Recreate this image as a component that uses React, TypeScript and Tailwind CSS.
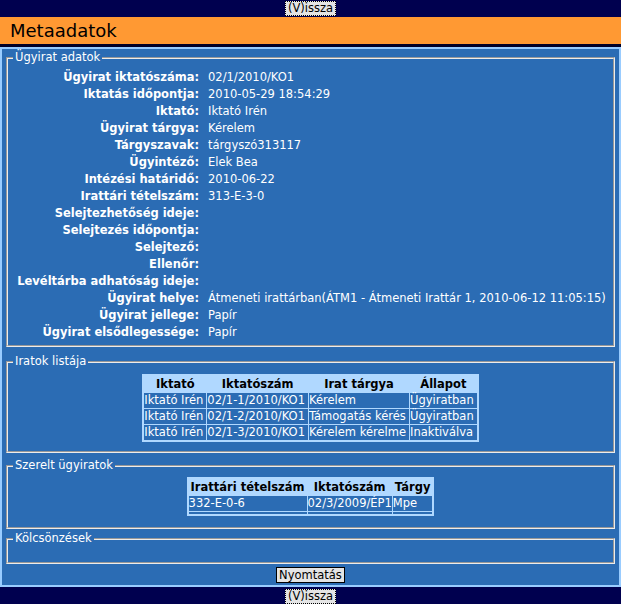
import React from "react"

const metaRows: [string, string][] = [
  ["Ügyirat iktatószáma:", "02/1/2010/KO1"],
  ["Iktatás időpontja:", "2010-05-29 18:54:29"],
  ["Iktató:", "Iktató Irén"],
  ["Ügyirat tárgya:", "Kérelem"],
  ["Tárgyszavak:", "tárgyszó313117"],
  ["Ügyintéző:", "Elek Bea"],
  ["Intézési határidő:", "2010-06-22"],
  ["Irattári tételszám:", "313-E-3-0"],
  ["Selejtezhetőség ideje:", ""],
  ["Selejtezés időpontja:", ""],
  ["Selejtező:", ""],
  ["Ellenőr:", ""],
  ["Levéltárba adhatóság ideje:", ""],
  ["Ügyirat helye:", "Átmeneti irattárban(ÁTM1 - Átmeneti Irattár 1, 2010-06-12 11:05:15)"],
  ["Ügyirat jellege:", "Papír"],
  ["Ügyirat elsődlegessége:", "Papír"],
]

const iratok = [
  ["Iktató Irén", "02/1-1/2010/KO1", "Kérelem", "Ügyiratban"],
  ["Iktató Irén", "02/1-2/2010/KO1", "Támogatás kérés", "Ügyiratban"],
  ["Iktató Irén", "02/1-3/2010/KO1", "Kérelem kérelme", "Inaktiválva"],
]

// fieldset with a grooved light border, legend sits in the top edge
const Box = ({
  title,
  className,
  children,
}: {
  title: string
  className: string
  children?: React.ReactNode
}) => (
  <fieldset className={`mx-[4px] border-2 border-[#ececec] [border-style:groove] ${className}`}>
    <legend className="ml-[5px] px-[2px] leading-[13px] text-white">{title}</legend>
    {children}
  </fieldset>
)

const VisszaButton = () => (
  <button className="h-[15px] px-[2px] bg-[#e4e4e4] text-black leading-[13px] border border-dotted border-black">
    (V)issza
  </button>
)

export default function App() {
  return (
    <div className="w-[621px] h-[604px] bg-[#00004f] font-['DejaVu_Sans',sans-serif] text-[11.5px] overflow-hidden">
      {/* top bar */}
      <div className="h-[17px] flex justify-center pt-px">
        <VisszaButton />
      </div>
      <div className="h-[27px] bg-[#ff9933] px-[10px] flex items-center text-[18px] text-black">
        Metaadatok
      </div>
      <div className="h-[3px] bg-[#000028]" />

      {/* main panel */}
      <div className="border-2 border-[#99ccff] bg-[#2b6cb4] text-white">
        <Box title="Ügyirat adatok" className="mt-[2px] pt-[5px] pb-[4px]">
          <div className="grid grid-cols-[191px_1fr] gap-x-[9px] leading-[17px]">
            {metaRows.map(([label, value]) => (
              <React.Fragment key={label}>
                <div className="text-right font-bold whitespace-nowrap">{label}</div>
                <div className="whitespace-nowrap">{value}</div>
              </React.Fragment>
            ))}
          </div>
        </Box>

        <Box title="Iratok listája" className="mt-[8px] pt-[6px] pb-[9px]">
          <table className="mx-auto border-separate border-spacing-[1px] bg-[#b0d8ff] border border-[#b0d8ff]">
            <thead>
              <tr className="text-black font-bold leading-[16px]">
                <th className="px-0">Iktató</th>
                <th className="px-0">Iktatószám</th>
                <th className="px-0">Irat tárgya</th>
                <th className="px-0">Állapot</th>
              </tr>
            </thead>
            <tbody>
              {iratok.map((row, i) => (
                <tr key={i} className="leading-[15px]">
                  {row.map((cell, j) => (
                    <td key={j} className="bg-[#2b6cb4] whitespace-nowrap p-0 pr-[3px]">
                      {cell}
                    </td>
                  ))}
                </tr>
              ))}
            </tbody>
          </table>
        </Box>

        <Box title="Szerelt ügyiratok" className="mt-[6px] pt-[5px] pb-[11px]">
          <table className="mx-auto border-separate border-spacing-[1px] bg-[#b0d8ff] border border-[#b0d8ff]">
            <thead>
              <tr className="text-black font-bold leading-[16px]">
                <th className="px-[2px]">Irattári tételszám</th>
                <th className="px-[2px]">Iktatószám</th>
                <th className="px-[2px]">Tárgy</th>
              </tr>
            </thead>
            <tbody>
              <tr className="leading-[15px]">
                <td className="bg-[#2b6cb4] p-0">332-E-0-6</td>
                <td className="bg-[#2b6cb4] p-0">02/3/2009/ÉP1</td>
                <td className="bg-[#2b6cb4] p-0">Mpe</td>
              </tr>
              <tr>
                <td className="bg-[#2b6cb4] p-0 h-[2px]" />
                <td className="bg-[#2b6cb4] p-0 h-[2px]" />
                <td className="bg-[#2b6cb4] p-0 h-[2px]" />
              </tr>
            </tbody>
          </table>
        </Box>

        <Box title="Kölcsönzések" className="mt-[3px]">
          <div className="h-[17px]" />
        </Box>

        <div className="flex justify-center mt-[3px] pb-[2px]">
          <button className="h-[16px] px-[2px] bg-[#e4e4e4] text-black leading-[14px] border border-black">
            Nyomtatás
          </button>
        </div>
      </div>

      {/* bottom bar */}
      <div className="flex justify-center pt-[2px]">
        <VisszaButton />
      </div>
    </div>
  )
}
